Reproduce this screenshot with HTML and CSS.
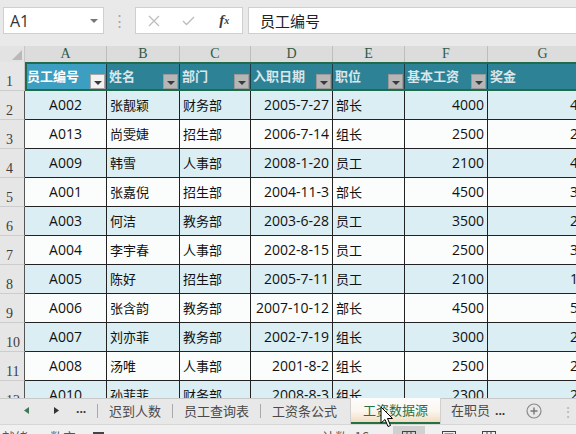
FILE: index.html
```html
<!DOCTYPE html>
<html lang="zh">
<head>
<meta charset="utf-8">
<title>工资数据源</title>
<link rel="stylesheet" href="styles.css">
</head>
<body>
<div class="app">
  <div class="fbar">
    <div class="namebox"><span>A1</span><span class="nb-arrow"></span></div>
    <div class="vdots">⋮</div>
    <div class="fxbox">
      <span class="slot"><svg width="12" height="12" viewBox="0 0 12 12"><path d="M1 1L11 11M11 1L1 11" stroke="#bdbdbd" stroke-width="1.3" fill="none"/></svg></span>
      <span class="slot"><svg width="13" height="10" viewBox="0 0 13 10"><path d="M1 5L4.5 8.5L12 1" stroke="#bdbdbd" stroke-width="1.4" fill="none"/></svg></span>
      <span class="slot fx">f<sub>x</sub></span>
    </div>
    <div class="finput">员工编号</div>
  </div>

  <div class="sheet">
    <div class="row colhead">
      <div class="corner"><svg width="25" height="16" viewBox="0 0 25 16"><polygon points="22,4 22,14 12,14" fill="#b9b9b9"/></svg></div>
      <div class="ch">A</div><div class="ch">B</div><div class="ch">C</div><div class="ch">D</div><div class="ch">E</div><div class="ch">F</div><div class="ch">G</div>
    </div>

    <div class="row hdr">
      <div class="rh">1</div>
      <div class="hc act"><span>员工编号</span><i class="dd"></i></div>
      <div class="hc"><span>姓名</span><i class="dd"></i></div>
      <div class="hc"><span>部门</span><i class="dd"></i></div>
      <div class="hc"><span>入职日期</span><i class="dd"></i></div>
      <div class="hc"><span>职位</span><i class="dd"></i></div>
      <div class="hc"><span>基本工资</span><i class="dd"></i></div>
      <div class="hc"><span>奖金</span></div>
    </div>

    <div class="row band"><div class="rh">2</div><div class="c m">A002</div><div class="c l">张靓颖</div><div class="c l">财务部</div><div class="c r">2005-7-27</div><div class="c l">部长</div><div class="c r">4000</div><div class="c r">400</div></div>
    <div class="row"><div class="rh">3</div><div class="c m">A013</div><div class="c l">尚雯婕</div><div class="c l">招生部</div><div class="c r">2006-7-14</div><div class="c l">组长</div><div class="c r">2500</div><div class="c r">250</div></div>
    <div class="row band"><div class="rh">4</div><div class="c m">A009</div><div class="c l">韩雪</div><div class="c l">人事部</div><div class="c r">2008-1-20</div><div class="c l">员工</div><div class="c r">2100</div><div class="c r">420</div></div>
    <div class="row"><div class="rh">5</div><div class="c m">A001</div><div class="c l">张嘉倪</div><div class="c l">招生部</div><div class="c r">2004-11-3</div><div class="c l">部长</div><div class="c r">4500</div><div class="c r">300</div></div>
    <div class="row band"><div class="rh">6</div><div class="c m">A003</div><div class="c l">何洁</div><div class="c l">教务部</div><div class="c r">2003-6-28</div><div class="c l">员工</div><div class="c r">3500</div><div class="c r">200</div></div>
    <div class="row"><div class="rh">7</div><div class="c m">A004</div><div class="c l">李宇春</div><div class="c l">人事部</div><div class="c r">2002-8-15</div><div class="c l">员工</div><div class="c r">2500</div><div class="c r">350</div></div>
    <div class="row band"><div class="rh">8</div><div class="c m">A005</div><div class="c l">陈好</div><div class="c l">招生部</div><div class="c r">2005-7-11</div><div class="c l">员工</div><div class="c r">2100</div><div class="c r">150</div></div>
    <div class="row"><div class="rh">9</div><div class="c m">A006</div><div class="c l">张含韵</div><div class="c l">教务部</div><div class="c r">2007-10-12</div><div class="c l">部长</div><div class="c r">4500</div><div class="c r">500</div></div>
    <div class="row band"><div class="rh">10</div><div class="c m">A007</div><div class="c l">刘亦菲</div><div class="c l">教务部</div><div class="c r">2002-7-19</div><div class="c l">组长</div><div class="c r">3000</div><div class="c r">200</div></div>
    <div class="row"><div class="rh">11</div><div class="c m">A008</div><div class="c l">汤唯</div><div class="c l">人事部</div><div class="c r">2001-8-2</div><div class="c l">组长</div><div class="c r">2500</div><div class="c r">250</div></div>
    <div class="row band"><div class="rh">12</div><div class="c m">A010</div><div class="c l">孙菲菲</div><div class="c l">财务部</div><div class="c r">2008-8-3</div><div class="c l">组长</div><div class="c r">2300</div><div class="c r">200</div></div>

    <div class="selection"></div>
  </div>

  <div class="tabbar">
    <div class="nav">
      <svg class="nl" width="5" height="7" viewBox="0 0 5 7"><polygon points="5,0 5,7 0,3.5" fill="#3e7a58"/></svg>
      <svg class="nr" width="5" height="7" viewBox="0 0 5 7"><polygon points="0,0 0,7 5,3.5" fill="#333"/></svg>
      <span class="dots">...</span>
    </div>
    <span class="sep"></span>
    <div class="tab">迟到人数</div>
    <span class="sep"></span>
    <div class="tab">员工查询表</div>
    <span class="sep"></span>
    <div class="tab">工资条公式</div>
    <div class="tab active">工资数据源</div>
    <div class="tab more">在职员 <b>...</b></div>
    <div class="add"><svg width="16" height="16" viewBox="0 0 16 16"><circle cx="8" cy="8" r="7" fill="none" stroke="#8a8a8a" stroke-width="1.2"/><path d="M8 4.5V11.5M4.5 8H11.5" stroke="#777" stroke-width="1.4"/></svg></div>
    <div class="kebab">⋮</div>
  </div>

  <div class="status">
    <span>就绪</span>
    <span class="st-num">数字</span>
    <span class="st-ico"></span>
    <span class="st-count">计数: 16</span>
    <span class="vbtn on"><svg width="14" height="12" viewBox="0 0 14 12"><rect x="0.5" y="0.5" width="13" height="11" fill="none" stroke="#444"/><path d="M0.5 4H13.5M5 0.5V11.5M9 0.5V11.5" stroke="#444"/></svg></span>
    <span class="vbtn"><svg width="14" height="12" viewBox="0 0 14 12"><rect x="0.5" y="0.5" width="13" height="11" fill="none" stroke="#444"/><rect x="3" y="3" width="8" height="9" fill="none" stroke="#444"/></svg></span>
    <span class="vbtn"><svg width="14" height="12" viewBox="0 0 14 12"><rect x="0.5" y="0.5" width="13" height="11" fill="none" stroke="#444"/><path d="M5 0.5V11.5M9 0.5V11.5" stroke="#444"/></svg></span>
    <span class="st-dot"></span>
  </div>

  <svg class="cursor" width="14" height="22" viewBox="0 0 14 22"><path d="M1 1L1 17L5 13.5L8 20.5L10.5 19.5L7.5 12.5L12.5 12.5Z" fill="#fff" stroke="#000" stroke-width="1" stroke-linejoin="round"/></svg>
</div>
</body>
</html>
```

FILE: styles.css
```css
* { box-sizing: border-box; margin: 0; padding: 0; }

body {
  margin: 0;
  width: 576px;
  height: 434px;
  overflow: hidden;
  background: #e9e9e9;
  font-family: "Open Sans", "Noto Sans CJK SC", sans-serif;
}

.app {
  position: relative;
  width: 576px;
  height: 434px;
  overflow: hidden;
  display: flex;
  flex-direction: column;
}

/* ---------- formula bar ---------- */
.fbar {
  height: 46px;
  flex: none;
  display: flex;
  align-items: flex-start;
  padding: 7px 0 0 3px;
  background: #e9e9e9;
}

.namebox {
  width: 101px;
  height: 27px;
  background: #fff;
  border: 1px solid #cfcfcf;
  display: flex;
  align-items: center;
  justify-content: space-between;
  padding: 0 5px 0 6px;
  font-size: 16px;
  color: #333;
}

.nb-arrow {
  width: 0;
  height: 0;
  border-left: 4px solid transparent;
  border-right: 4px solid transparent;
  border-top: 4px solid #777;
}

.vdots {
  width: 31px;
  text-align: center;
  color: #a5a5a5;
  font-size: 15px;
  line-height: 27px;
}

.fxbox {
  width: 108px;
  height: 27px;
  background: #fff;
  border: 1px solid #cfcfcf;
  display: flex;
  align-items: center;
}

.slot {
  width: 36px;
  display: flex;
  justify-content: center;
  align-items: center;
}

.fx {
  font-family: "Liberation Serif", serif;
  font-style: italic;
  font-weight: bold;
  font-size: 15px;
  color: #3a3a3a;
  line-height: 1;
}

.fx sub {
  font-size: 10px;
  vertical-align: -1px;
}

.finput {
  flex: 1;
  height: 27px;
  margin-left: 5px;
  background: #fff;
  border: 1px solid #cfcfcf;
  border-right: none;
  padding-left: 11px;
  font-family: "Noto Sans CJK SC", sans-serif;
  font-size: 15px;
  line-height: 25px;
  color: #222;
}

/* ---------- sheet ---------- */
.sheet {
  position: relative;
  flex: none;
  height: 352px;
  overflow: hidden;
  background: #fff;
}

.row {
  display: grid;
  grid-template-columns: 25px 82px 73px 71px 82px 72px 83px 110px;
  height: 29px;
  font-size: 14px;
  color: #111;
  background: #fbfdfd;
}

.row.band { background: #daeef3; }

.colhead {
  height: 16px;
  background: #dcdcdc;
}

.corner {
  background: #e3e3e3;
  border-right: 1px solid #c6c6c6;
}

.ch {
  border-right: 1px solid #bdbdbd;
  text-align: center;
  font-family: "Liberation Serif", serif;
  font-size: 14px;
  line-height: 16px;
  color: #2f5a45;
}

.rh {
  background: #e6e6e6;
  border-right: 1px solid #555;
  border-bottom: 1px solid #cdcdcd;
  display: flex;
  align-items: flex-end;
  padding: 0 0 0 6px;
  font-family: "Liberation Serif", serif;
  font-size: 14px;
  line-height: 17px;
  color: #3d3d3d;
}

.hdr .rh { border-right-color: #c6c6c6; }

.hc {
  background: #2e8296;
  border-right: 1px solid #1b3f48;
  display: flex;
  align-items: center;
  justify-content: space-between;
  padding: 0 1px 0 2px;
  font-family: "Noto Sans CJK SC", sans-serif;
  font-weight: bold;
  font-size: 13px;
  line-height: 16px;
  color: #d9e6ea;
}

.hc span { margin-top: -2px; }

.hc.act {
  background: #3c9ec0;
  color: #fff;
}

.dd {
  align-self: flex-end;
  margin-bottom: 2px;
  width: 15px;
  height: 15px;
  background: #b6b6b6;
  border: 1px solid #9a9a9a;
  display: flex;
  align-items: center;
  justify-content: center;
}

.dd::after {
  content: "";
  margin-top: 2px;
  border-left: 4px solid transparent;
  border-right: 4px solid transparent;
  border-top: 4px solid #3a3a3a;
}

.hc.act .dd {
  background: #f2f2f2;
  border-color: #a8a8a8;
}

.c {
  border-right: 1px solid #222;
  border-bottom: 1px solid #222;
  display: flex;
  align-items: center;
  white-space: nowrap;
  overflow: hidden;
  line-height: 18px;
}

.c.m { justify-content: center; }
.c.r { justify-content: flex-end; padding-right: 3px; }
.c.l {
  padding-left: 3px;
  font-family: "Noto Sans CJK SC", sans-serif;
  font-size: 13px;
}

.selection {
  position: absolute;
  left: 25px;
  top: 16px;
  width: 600px;
  height: 29px;
  border: 2px solid #1f6c4c;
  pointer-events: none;
}

/* ---------- sheet tabs ---------- */
.tabbar {
  height: 26px;
  flex: none;
  display: flex;
  align-items: center;
  padding-bottom: 2px;
  background: #e8e8e8;
  border-top: 1px solid #c9c9c9;
  font-family: "Noto Sans CJK SC", sans-serif;
  font-size: 13px;
  color: #4a4a4a;
}

.nav {
  display: flex;
  align-items: center;
  padding-left: 24px;
  width: 97px;
}

.nr { margin-left: 25px; }

.dots {
  margin-left: 17px;
  font-family: "Open Sans", sans-serif;
  font-weight: bold;
  font-size: 12px;
  color: #333;
  line-height: 12px;
  margin-top: -4px;
}

.sep {
  width: 1px;
  height: 14px;
  background: #a9a9a9;
}

.tab {
  padding: 0 11px;
  line-height: 18px;
  white-space: nowrap;
}

.tab.active {
  align-self: stretch;
  margin: -1px 0 -2px 3px;
  padding: 0 12px;
  display: flex;
  align-items: center;
  color: #217346;
  background: linear-gradient(to bottom, #fdfdfd 0%, #fbf6ef 55%, #f2dcc0 100%);
  border-bottom: 2px solid #217346;
  box-shadow: 1px 0 0 #d0d0d0, -1px 0 0 #d0d0d0;
}

.tab.more b {
  font-family: "Open Sans", sans-serif;
  font-size: 12px;
  color: #333;
  margin-left: 2px;
}

.add {
  margin-left: 10px;
  display: flex;
  align-items: center;
}

.kebab {
  margin-left: 19px;
  color: #b5b5b5;
  font-size: 14px;
}

/* ---------- status bar ---------- */
.status {
  height: 24px;
  flex: none;
  display: flex;
  align-items: center;
  padding: 0 0 0 2px;
  background: #f0f0f0;
  border-top: 1px solid #d6d6d6;
  font-family: "Noto Sans CJK SC", sans-serif;
  font-size: 13px;
  color: #555;
}

.st-num { margin-left: 22px; }

.st-ico {
  margin-left: 17px;
  width: 11px;
  height: 10px;
  background: #444;
}

.st-count { margin-left: 218px; }

.vbtn {
  display: flex;
  align-items: center;
  justify-content: center;
  width: 32px;
  height: 22px;
  margin-left: 8px;
}

.vbtn.on {
  margin-left: 24px;
  background: #d0d0d0;
}

.st-dot {
  margin-left: 60px;
  width: 4px;
  height: 4px;
  background: #333;
}

.cursor {
  position: absolute;
  left: 380px;
  top: 406px;
}
```
